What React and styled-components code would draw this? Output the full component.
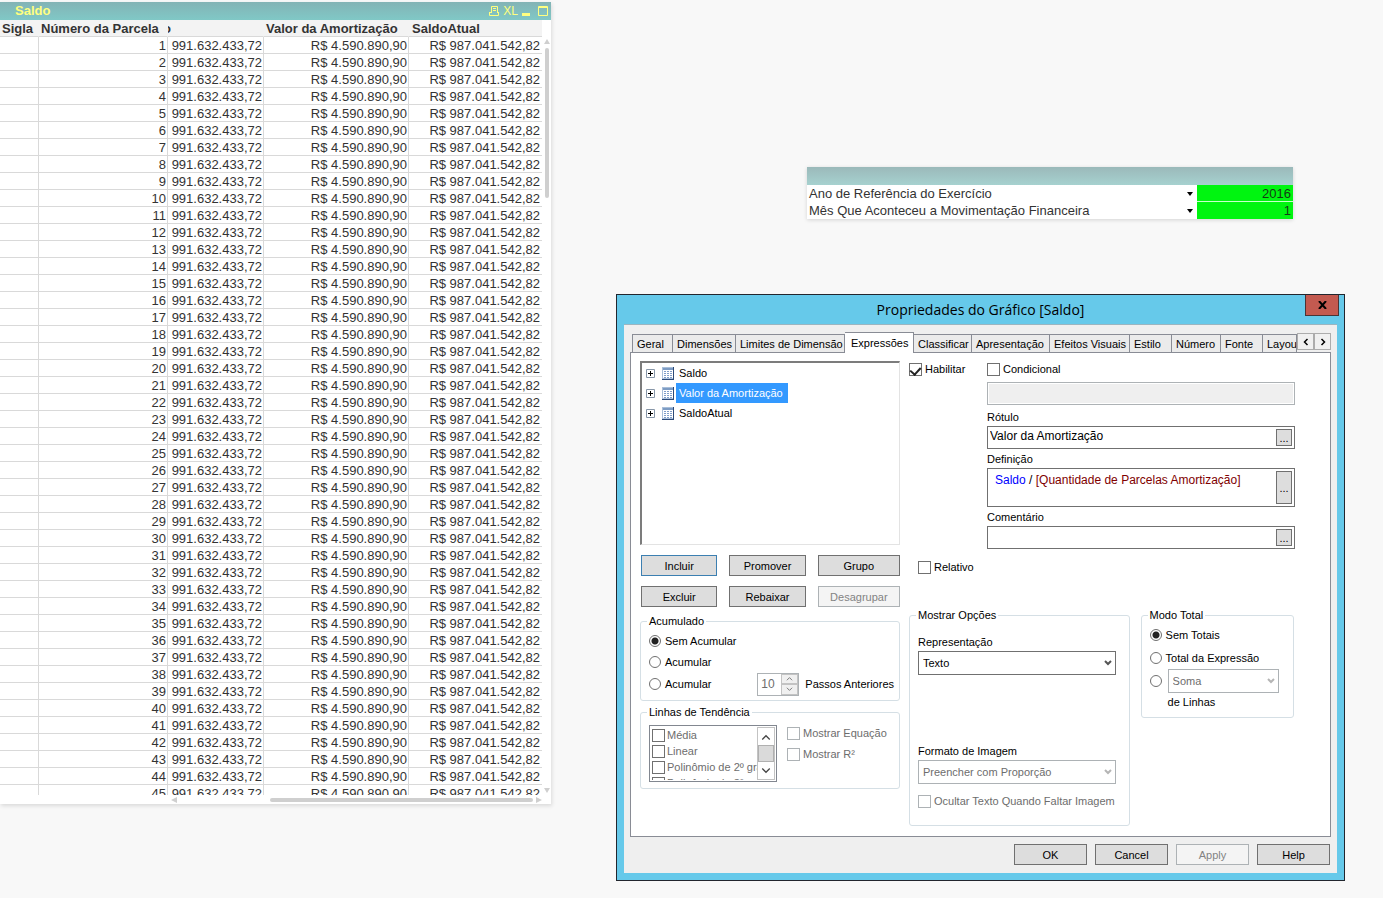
import React, {useState} from 'react'
import styled, {createGlobalStyle, css} from 'styled-components'

const GlobalStyle = createGlobalStyle`
  * {
    box-sizing: border-box;
  }
  body {
    margin: 0;
    background: #f8f8f8;
    font-family: "Liberation Sans", Arial, sans-serif;
  }
  button, input, select {
    margin: 0;
    padding: 0;
    font: inherit;
    color: inherit;
    border-radius: 0;
  }
`

/**
 * page
 */
const Desktop = styled.main`
  display: grid;
  grid-template-columns: minmax(0, 551fr) minmax(0, 729fr);
  column-gap: 65px;
  align-items: start;
  min-height: 100vh;
  padding-right: 38px;
`
const Side = styled.div`
  display: flex;
  flex-direction: column;
  padding-top: 167px;
`

/**
 * chart table
 */
const Sheet = styled.section`
  margin-top: 2px;
  background: #fff;
  box-shadow: 1px 2px 4px rgba(0, 0, 0, 0.12);
  color: #333;
  font-size: 13px;
`
const Caption = styled.header`
  display: flex;
  align-items: center;
  height: 18px;
  padding: 0 3px 0 15px;
  background: linear-gradient(#83b3b5, #80c8c6);
  color: #ffff80;
  h2 {
    flex: 1;
    margin: 0;
    font-size: 13px;
    line-height: 18px;
  }
`
const CaptionIcons = styled.div`
  display: flex;
  gap: 4px;
  button {
    display: flex;
    border: 0;
    background: none;
    color: #ffff80;
  }
`
const ExcelText = styled.span`
  font-family: "Liberation Sans Narrow", "Liberation Sans", sans-serif;
  font-size: 12px;
  line-height: 12px;
`
const MaximizeWrap = styled.span`
  display: flex;
  margin-left: 4px;
`
const SheetBody = styled.div`
  display: flex;
  height: 775px;
`
const TableClip = styled.div`
  flex: 1;
  overflow: hidden;
`
const Grid = styled.table`
  width: 100%;
  table-layout: fixed;
  border-collapse: separate;
  border-spacing: 0;
  th, td {
    height: 17px;
    padding: 2px 1px 0 2px;
    line-height: 14px;
    white-space: nowrap;
    overflow: hidden;
    border-bottom: 1px solid #d9d9d9;
    border-right: 1px solid #d9d9d9;
  }
  th:last-child, td:last-child {
    padding-right: 2px;
    border-right: 0;
  }
  th:last-child {
    padding-left: 3px;
  }
  th {
    background: #f3f3f3;
    text-align: left;
    border-right-color: #f3f3f3;
  }
  td {
    text-align: right;
  }
`
// the scrolled column leaves only the end of its title visible
const ScrolledTitle = styled.div`
  display: flex;
  justify-content: flex-end;
  width: 3px;
  margin-left: -2px;
  overflow: hidden;
`
const Rail = styled.div`
  display: flex;
  flex-direction: ${p => p.$vertical ? 'column' : 'row'};
  align-items: center;
  gap: 3px;
  color: #cfcfcf;
  ${p => p.$vertical ? css`
    width: 9px;
    padding: 19px 0 1px;
  ` : css`
    height: 9px;
    padding: 0 9px 0 31%;
  `}
`
const Thumb = styled.div`
  flex: ${p => p.$size};
  align-self: center;
  border-radius: 2px;
  background: #cfcfcf;
  ${p => p.$vertical ? 'width: 4px;' : 'height: 4px;'}
`
const Spacer = styled.div`
  flex: ${p => p.$size};
`

/**
 * input box
 */
const InputBox = styled.section`
  margin: 0 52px 75px 191px;
  background: #fff;
  box-shadow: 0 1px 4px rgba(0, 0, 0, 0.15);
  color: #333;
  font-size: 13px;
`
const InputBoxCaption = styled.div`
  height: 18px;
  background: linear-gradient(#9bb9ba, #a6d1cf);
`
const VariableRow = styled.div`
  display: flex;
  align-items: stretch;
  height: 17px;
  line-height: 17px;
  label {
    flex: 1;
    padding-left: 2px;
    white-space: nowrap;
  }
  button {
    display: flex;
    align-items: center;
    border: 0;
    background: none;
    margin-right: 4px;
    color: #000;
  }
  input {
    width: 96px;
    padding-right: 2px;
    border: 0;
    border-bottom: 1px solid ${p => p.$last ? '#00f510' : '#c8ffcc'};
    background: #00f510;
    color: #143c14;
    text-align: right;
  }
`

/**
 * dialog
 */
const Dialog = styled.section`
  border: 1px solid #22262e;
  background: #66c9ea;
  font-size: 11px;
  color: #000;
`
const TitleBar = styled.header`
  display: grid;
  grid-template-columns: 1fr auto 1fr;
  height: 29px;
  h1 {
    grid-column: 2;
    margin: 0;
    font: 14px/30px "Open Sans", "Noto Sans", sans-serif;
  }
`
const CloseButton = styled.button`
  display: flex;
  align-items: center;
  justify-content: center;
  justify-self: end;
  width: 34px;
  height: 21px;
  margin-right: 5px;
  border: 1px solid #4a3436;
  border-top: 0;
  background: #c35a50;
`
const Client = styled.div`
  margin: 0 7px 7px;
  padding: 7px 6px 8px;
  border-top: 1px solid #9bb5c0;
  background: #efefef;
`
const TabStrip = styled.div`
  display: flex;
  align-items: flex-end;
  height: 20px;
  padding-left: 2px;
`
const Tab = styled.button`
  position: relative;
  flex: 0 1 ${p => p.$w}px;
  height: 18px;
  padding-left: 4px;
  overflow: hidden;
  border: 1px solid #898c95;
  border-bottom: 0;
  border-left-width: ${p => p.$first ? '1px' : '0'};
  background: #ebebeb;
  line-height: 18px;
  text-align: left;
  white-space: nowrap;
  ${p => p.$active && css`
    height: 21px;
    margin-bottom: -1px;
    padding-left: 6px;
    background: #fff;
  `}
`
const TabScroll = styled.button`
  display: flex;
  align-items: center;
  justify-content: center;
  align-self: flex-start;
  flex: 0 0 17px;
  height: 17px;
  margin-top: 1px;
  border: 1px solid #acacac;
  background: #f0f0f0;
`
const Page = styled.div`
  display: grid;
  grid-template-columns: minmax(0, 260fr) minmax(0, 386fr);
  column-gap: 9px;
  padding: 8px 35px 10px 9px;
  border: 1px solid #898c95;
  background: #fff;
`
const Column = styled.div`
  display: flex;
  flex-direction: column;
`
const Tree = styled.ul`
  height: 184px;
  margin: 0 0 10px;
  padding: 0 0 0 4px;
  list-style: none;
  border: 2px solid #7c7c7c;
  border-right: 1px solid #e3e3e3;
  border-bottom: 1px solid #e3e3e3;
`
const TreeItem = styled.li`
  display: flex;
  align-items: center;
  height: 20px;
  svg {
    margin-right: 7px;
  }
  svg + svg {
    margin-right: 2px;
  }
  span {
    padding: 0 5px 0 3px;
    line-height: 20px;
    ${p => p.$selected && 'background: #3399ff; color: #fff;'}
  }
`
const ButtonGrid = styled.div`
  display: grid;
  grid-template-columns: 76fr 76fr 82fr;
  gap: 10px 12px;
  margin-bottom: 7px;
  padding-left: 1px;
`
const PushButton = styled.button`
  height: 21px;
  border: 1px solid ${p => p.$focused ? '#3c7fb1' : '#707070'};
  background: #dddddd;
  &:disabled {
    border-color: #adb2b5;
    background: #f4f4f4;
    color: #838383;
  }
`
const Group = styled.fieldset`
  min-width: 0;
  margin: 0 0 ${p => p.$gap || 0}px;
  padding: ${p => p.$pad};
  border: 1px solid #d5dfe5;
  border-radius: 3px;
  legend {
    height: 14px;
    margin-left: -2px;
    padding: 0 2px;
    line-height: 14px;
  }
`
const Row = styled.div`
  display: flex;
  align-items: center;
  min-height: ${p => p.$h}px;
`
const Choice = styled.label`
  display: flex;
  align-items: center;
  gap: ${p => p.$gap || 3}px;
  min-height: 16px;
  white-space: nowrap;
  color: ${p => p.$dim ? '#6d6d6d' : 'inherit'};
`
const Check = styled.input.attrs({type: 'checkbox'})`
  appearance: none;
  display: flex;
  justify-content: center;
  flex: none;
  width: 13px;
  height: 13px;
  border: 1px solid #707070;
  background: #fff;
  &:disabled {
    border-color: ${p => p.$strong ? '#707070' : '#adb2b5'};
  }
  &:checked::after {
    content: '';
    width: 5px;
    height: 8px;
    margin-top: 1px;
    border: solid #222;
    border-width: 0 2px 2px 0;
    transform: rotate(42deg);
  }
`
const Radio = styled.input.attrs({type: 'radio'})`
  appearance: none;
  flex: none;
  width: 12px;
  height: 12px;
  border: 1px solid #707070;
  border-radius: 50%;
  background: #fff;
  &:checked {
    background: radial-gradient(circle, #222 3px, #fff 4px);
  }
`
const Spinner = styled.div`
  display: flex;
  width: 42px;
  height: 23px;
  margin: 0 6px 0 auto;
  border: 1px solid #adb2b5;
  color: #6d6d6d;
  input {
    flex: 1;
    min-width: 0;
    padding-left: 3px;
    border: 0;
    background: #fff;
    font-size: 12px;
  }
`
const SpinButtons = styled.div`
  display: grid;
  width: 17px;
  button {
    display: flex;
    align-items: center;
    justify-content: center;
    border: 1px solid #c3c3c3;
    background: #f0f0f0;
  }
`
const TrendRow = styled.div`
  display: flex;
  align-items: flex-start;
  gap: 10px;
`
const TrendList = styled.div`
  display: flex;
  width: 128px;
  height: 57px;
  padding: 1px;
  border: 1px solid #828790;
`
const TrendItems = styled.div`
  flex: 1;
  min-width: 0;
  padding-left: 1px;
  overflow: hidden;
`
const ListScroll = styled.div`
  display: flex;
  flex-direction: column;
  flex: none;
  width: 18px;
  border: 1px solid #c3c3c3;
  color: #444;
  button {
    display: flex;
    align-items: center;
    justify-content: center;
    height: 17px;
    border: 0;
    background: #fff;
  }
  div {
    flex: 1;
    border: 1px solid #b0b0b0;
    background: #dadada;
  }
`
const TrendOptions = styled.div`
  display: flex;
  flex-direction: column;
  gap: 5px;
`
const Switches = styled.div`
  display: grid;
  grid-template-columns: 78px 1fr;
  margin-bottom: 5px;
`
const Fields = styled.div`
  display: flex;
  flex-direction: column;
  margin: 0 0 10px 78px;
  > label, > span {
    height: 14px;
    margin: 3px 0 2px;
    line-height: 14px;
  }
`
const DisabledField = styled.input`
  height: 23px;
  margin-bottom: 2px;
  border: 1px solid #adb2b5;
  background: #efefef;
  box-shadow: inset 0 0 0 1px #fff;
`
const Field = styled.div`
  display: flex;
  height: ${p => p.$tall ? 39 : 23}px;
  padding: 2px;
  border: 1px solid #707070;
  font-size: 12px;
  input {
    flex: 1;
    min-width: 0;
    height: 14px;
    border: 0;
    outline: 0;
  }
  button {
    width: 16px;
    padding-top: 2px;
    border: 1px solid #707070;
    background: #dddddd;
    font-size: 11px;
    line-height: 11px;
  }
`
const Formula = styled.div`
  flex: 1;
  padding-left: 5px;
  line-height: 18px;
  color: #800000;
  b {
    font-weight: normal;
    color: #0000ff;
  }
  i {
    font-style: normal;
    color: #000;
  }
`
const Relative = styled.div`
  margin: 0 0 33px 9px;
`
const Groups = styled.div`
  display: grid;
  grid-template-columns: 220fr 153fr;
  column-gap: 11px;
  align-items: start;
  padding-right: 1px;
`
const Stack = styled.div`
  display: flex;
  flex-direction: column;
  gap: 2px;
  margin-top: ${p => p.$top || 0}px;
  > label {
    line-height: 14px;
  }
`
const Picker = styled.div`
  display: grid;
  align-items: center;
  flex: 1;
  height: 24px;
  select, svg {
    grid-area: 1 / 1;
  }
  select {
    appearance: none;
    width: 100%;
    height: 24px;
    padding-left: 4px;
    border: 1px solid #707070;
    background: #fff;
    outline: 0;
  }
  select:disabled {
    border-color: #adb2b5;
    color: #6d6d6d;
    opacity: 1;
  }
  svg {
    z-index: 1;
    justify-self: end;
    margin-right: 4px;
    pointer-events: none;
    color: ${p => p.$dim ? '#b5b5b5' : '#555'};
  }
`
const BelowPicker = styled.div`
  padding-left: 18px;
  line-height: 18px;
`
const Footer = styled.footer`
  display: flex;
  justify-content: flex-end;
  gap: 8px;
  padding: 7px 1px 0;
  button {
    width: 73px;
  }
`

/**
 * icons
 */
const arrowPaths = {
    up: 'M0 5h6L3 0z',
    down: 'M0 0h6L3 5z',
    left: 'M6 0v6L0 3z',
    right: 'M0 0v6l6-3z',
}
const Arrow = ({dir}) => (
    <svg width="6" height="6" viewBox="0 0 6 6" fill="currentColor"><path d={arrowPaths[dir]}/></svg>
)

const chevronPaths = {
    up: 'M1 6l3-3 3 3',
    down: 'M1 2l3 3 3-3',
    left: 'M5 2L3 4l2 2',
    right: 'M3 2l2 2-2 2',
}
const Chevron = ({dir, size = 8, weight = 1}) => (
    <svg width={size} height={size} viewBox="0 0 8 8" fill="none" stroke="currentColor" strokeWidth={weight}>
        <path d={chevronPaths[dir]}/>
    </svg>
)

const PrintIcon = () => (
    <svg width="10" height="12" viewBox="0 0 10 12" fill="none" stroke="currentColor">
        <path d="M2.5 8V1.5h6V8M4 3.5h3M4 5.5h3M0 7.5h2M.5 7v3.5h9V7"/>
    </svg>
)
const MinimizeIcon = () => (
    <svg width="8" height="12" viewBox="0 0 8 12" fill="currentColor"><path d="M0 8h8v3H0z"/></svg>
)
const MaximizeIcon = () => (
    <svg width="10" height="12" viewBox="0 0 10 12" fill="none" stroke="currentColor">
        <path d="M.5 1.5h9v9h-9zM0 2.5h10"/>
    </svg>
)
const CloseIcon = () => (
    <svg width="9" height="8" viewBox="0 0 9 8" stroke="#000" strokeWidth="2"><path d="M1 0l7 8M8 0L1 8"/></svg>
)
const ExpandIcon = () => (
    <svg width="9" height="9" viewBox="0 0 9 9" fill="#fff">
        <path d="M.5.5h8v8h-8z" stroke="#8796a8"/>
        <path d="M2 4.5h5M4.5 2v5" stroke="#000"/>
    </svg>
)
const TableIcon = () => (
    <svg width="12" height="13" viewBox="0 0 12 13">
        <path d="M0 0h12v13H0z" fill="#a9bfda"/>
        <path d="M1 1h10v2H1z" fill="#7d9cc4"/>
        <path d="M1 3h10v8H1z" fill="#fff"/>
        <path d="M2 4.5h2M5 4.5h2M8 4.5h2M2 6.5h2M5 6.5h2M8 6.5h2M2 8.5h2M5 8.5h2M8 8.5h2M2 10.5h2M5 10.5h2M8 10.5h2" stroke="#7f9dc8"/>
        <path d="M11.5 0v13M0 12.5h12" stroke="#2c4a78"/>
    </svg>
)

/**
 * data
 */
const installments = Array.from({length: 45}, (_, i) => i + 1)

const tabs = [
    ['Geral', 41],
    ['Dimensões', 63],
    ['Limites de Dimensão', 109],
    ['Expressões', 69],
    ['Classificar', 58],
    ['Apresentação', 78],
    ['Efeitos Visuais', 80],
    ['Estilo', 42],
    ['Número', 49],
    ['Fonte', 42],
    ['Layout', 34],
]

const expressions = ['Saldo', 'Valor da Amortização', 'SaldoAtual']
const trends = ['Média', 'Linear', 'Polinômio de 2º grau', 'Polinômio de 3º grau']

const BalanceSheet = () => (
    <Sheet>
        <Caption>
            <h2>Saldo</h2>
            <CaptionIcons>
                <button aria-label="Imprimir"><PrintIcon/></button>
                <button><ExcelText>XL</ExcelText></button>
                <button aria-label="Minimizar"><MinimizeIcon/></button>
                <button aria-label="Maximizar"><MaximizeWrap><MaximizeIcon/></MaximizeWrap></button>
            </CaptionIcons>
        </Caption>
        <SheetBody>
            <TableClip>
                <Grid>
                    <colgroup>
                        <col width="39"/>
                        <col width="129"/>
                        <col width="96"/>
                        <col width="145"/>
                        <col width="133"/>
                    </colgroup>
                    <thead>
                        <tr>
                            <th>Sigla</th>
                            <th>Número da Parcela</th>
                            <th><ScrolledTitle>o</ScrolledTitle></th>
                            <th>Valor da Amortização</th>
                            <th>SaldoAtual</th>
                        </tr>
                    </thead>
                    <tbody>
                        {installments.map(n => (
                            <tr key={n}>
                                <td></td>
                                <td>{n}</td>
                                <td>991.632.433,72</td>
                                <td>R$ 4.590.890,90</td>
                                <td>R$ 987.041.542,82</td>
                            </tr>
                        ))}
                    </tbody>
                </Grid>
            </TableClip>
            <Rail $vertical>
                <Arrow dir="up"/>
                <Thumb $vertical $size={151}/>
                <Spacer $size={588}/>
                <Arrow dir="down"/>
            </Rail>
        </SheetBody>
        <Rail>
            <Arrow dir="left"/>
            <Spacer $size={88}/>
            <Thumb $size={267}/>
            <Arrow dir="right"/>
        </Rail>
    </Sheet>
)

const Variable = ({id, label, value, last}) => (
    <VariableRow $last={last}>
        <label htmlFor={id}>{label}</label>
        <button aria-label={`Opções de ${label}`}>
            <svg width="6" height="4" viewBox="0 0 6 4"><path d="M0 0h6L3 4z"/></svg>
        </button>
        <input id={id} defaultValue={value}/>
    </VariableRow>
)

const Index = () => {
    /**
     * state
     */
    const [tab, setTab] = useState('Expressões')
    const [selected, setSelected] = useState('Valor da Amortização')

    /**
     * render
     */
    return (
        <Desktop>
            <GlobalStyle/>
            <BalanceSheet/>
            <Side>
                <InputBox>
                    <InputBoxCaption/>
                    <Variable id="year" label="Ano de Referência do Exercício" value="2016"/>
                    <Variable id="month" label="Mês Que Aconteceu a Movimentação Financeira" value="1" last/>
                </InputBox>

                <Dialog role="dialog" aria-labelledby="dialog-title">
                    <TitleBar>
                        <h1 id="dialog-title">Propriedades do Gráfico [Saldo]</h1>
                        <CloseButton aria-label="Fechar"><CloseIcon/></CloseButton>
                    </TitleBar>
                    <Client>
                        <TabStrip role="tablist">
                            {tabs.map(([name, w], i) => (
                                <Tab
                                    key={name}
                                    role="tab"
                                    aria-selected={tab === name}
                                    $w={w}
                                    $first={i === 0}
                                    $active={tab === name}
                                    onClick={() => setTab(name)}
                                >{name}</Tab>
                            ))}
                            <TabScroll aria-label="Abas anteriores"><Chevron dir="left" size={12}/></TabScroll>
                            <TabScroll aria-label="Próximas abas"><Chevron dir="right" size={12}/></TabScroll>
                        </TabStrip>

                        <Page>
                            <Column>
                                <Tree>
                                    {expressions.map(name => (
                                        <TreeItem key={name} $selected={selected === name} onClick={() => setSelected(name)}>
                                            <ExpandIcon/>
                                            <TableIcon/>
                                            <span>{name}</span>
                                        </TreeItem>
                                    ))}
                                </Tree>
                                <ButtonGrid>
                                    <PushButton $focused>Incluir</PushButton>
                                    <PushButton>Promover</PushButton>
                                    <PushButton>Grupo</PushButton>
                                    <PushButton>Excluir</PushButton>
                                    <PushButton>Rebaixar</PushButton>
                                    <PushButton disabled>Desagrupar</PushButton>
                                </ButtonGrid>

                                <Group $pad="2px 5px 4px 8px" $gap={4}>
                                    <legend>Acumulado</legend>
                                    <Row $h={21}>
                                        <Choice $gap={4}><Radio name="acc" defaultChecked/>Sem Acumular</Choice>
                                    </Row>
                                    <Row $h={21}>
                                        <Choice $gap={4}><Radio name="acc"/>Acumular</Choice>
                                    </Row>
                                    <Row $h={24}>
                                        <Choice $gap={4}><Radio name="acc"/>Acumular</Choice>
                                        <Spinner>
                                            <input id="steps" defaultValue="10" disabled/>
                                            <SpinButtons>
                                                <button aria-label="Aumentar" disabled><Chevron dir="up" size={7}/></button>
                                                <button aria-label="Diminuir" disabled><Chevron dir="down" size={7}/></button>
                                            </SpinButtons>
                                        </Spinner>
                                        <label htmlFor="steps">Passos Anteriores</label>
                                    </Row>
                                </Group>

                                <Group $pad="6px 8px">
                                    <legend>Linhas de Tendência</legend>
                                    <TrendRow>
                                        <TrendList>
                                            <TrendItems>
                                                {trends.map(t => (
                                                    <Choice key={t} $gap={2} $dim><Check $strong disabled/>{t}</Choice>
                                                ))}
                                            </TrendItems>
                                            <ListScroll>
                                                <button aria-label="Rolar para cima"><Chevron dir="up" size={10}/></button>
                                                <div/>
                                                <button aria-label="Rolar para baixo"><Chevron dir="down" size={10}/></button>
                                            </ListScroll>
                                        </TrendList>
                                        <TrendOptions>
                                            <Choice $dim><Check disabled/>Mostrar Equação</Choice>
                                            <Choice $dim><Check disabled/>Mostrar R²</Choice>
                                        </TrendOptions>
                                    </TrendRow>
                                </Group>
                            </Column>

                            <Column>
                                <Switches>
                                    <Choice><Check defaultChecked/>Habilitar</Choice>
                                    <Choice><Check/>Condicional</Choice>
                                </Switches>
                                <Fields>
                                    <DisabledField aria-label="Condição" disabled/>
                                    <label htmlFor="title">Rótulo</label>
                                    <Field>
                                        <input id="title" defaultValue="Valor da Amortização"/>
                                        <button aria-label="Editar rótulo">...</button>
                                    </Field>
                                    <span id="formula">Definição</span>
                                    <Field $tall>
                                        <Formula role="textbox" aria-labelledby="formula">
                                            <b>Saldo</b> <i>/</i> [Quantidade de Parcelas Amortização]
                                        </Formula>
                                        <button aria-label="Editar definição">...</button>
                                    </Field>
                                    <label htmlFor="comment">Comentário</label>
                                    <Field>
                                        <input id="comment"/>
                                        <button aria-label="Editar comentário">...</button>
                                    </Field>
                                </Fields>
                                <Relative>
                                    <Choice><Check/>Relativo</Choice>
                                </Relative>

                                <Groups>
                                    <Group $pad="13px 13px 16px 8px">
                                        <legend>Mostrar Opções</legend>
                                        <Stack>
                                            <label htmlFor="repr">Representação</label>
                                            <Picker>
                                                <select id="repr"><option>Texto</option></select>
                                                <Chevron dir="down" weight={2}/>
                                            </Picker>
                                        </Stack>
                                        <Stack $top={69}>
                                            <label htmlFor="format">Formato de Imagem</label>
                                            <Picker $dim>
                                                <select id="format" disabled><option>Preencher com Proporção</option></select>
                                                <Chevron dir="down" weight={2}/>
                                            </Picker>
                                        </Stack>
                                        <Stack $top={9}>
                                            <Choice $dim><Check disabled/>Ocultar Texto Quando Faltar Imagem</Choice>
                                        </Stack>
                                    </Group>
                                    <Group $pad="1px 14px 6px 8px">
                                        <legend>Modo Total</legend>
                                        <Row $h={23}>
                                            <Choice $gap={4}><Radio name="total" defaultChecked/>Sem Totais</Choice>
                                        </Row>
                                        <Row $h={23}>
                                            <Choice $gap={4}><Radio name="total"/>Total da Expressão</Choice>
                                        </Row>
                                        <Row $h={24}>
                                            <Choice $gap={6}><Radio name="total" aria-label="Soma de Linhas"/><span/></Choice>
                                            <Picker $dim>
                                                <select aria-label="Função" disabled><option>Soma</option></select>
                                                <Chevron dir="down" weight={2}/>
                                            </Picker>
                                        </Row>
                                        <BelowPicker>de Linhas</BelowPicker>
                                    </Group>
                                </Groups>
                            </Column>
                        </Page>

                        <Footer>
                            <PushButton>OK</PushButton>
                            <PushButton>Cancel</PushButton>
                            <PushButton disabled>Apply</PushButton>
                            <PushButton>Help</PushButton>
                        </Footer>
                    </Client>
                </Dialog>
            </Side>
        </Desktop>
    )
}

export default Index
